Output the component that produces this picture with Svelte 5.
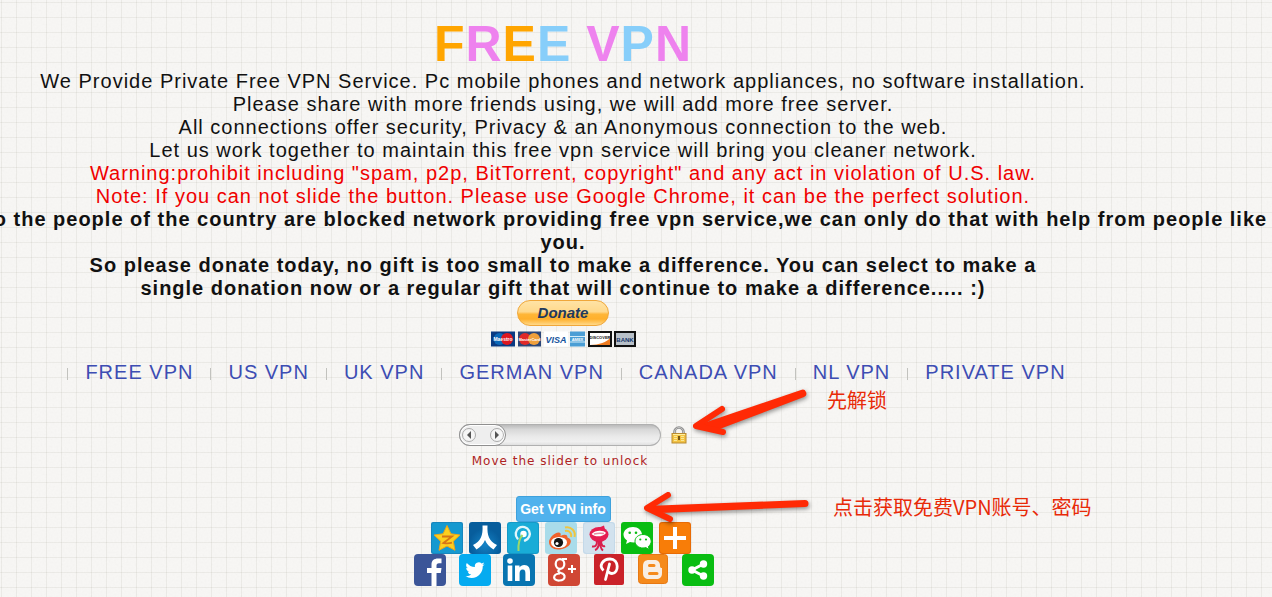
<script>
  const title = [
    ['F', 'orange'], ['R', 'violet'], ['E', 'orange'], ['E', 'sky'],
    [' ', 'sky'], ['V', 'violet'], ['P', 'sky'], ['N', 'violet']
  ];
  const servers = ['FREE VPN', 'US VPN', 'UK VPN', 'GERMAN VPN', 'CANADA VPN', 'NL VPN', 'PRIVATE VPN'];
  let unlock = $state(0);
</script>

<main>
  <h1>{#each title as [letter, tone]}<span class={tone}>{letter}</span>{/each}</h1>

  <div class="intro">
    <p>We Provide Private Free VPN Service. Pc mobile phones and network appliances, no software installation.</p>
    <p>Please share with more friends using, we will add more free server.</p>
    <p>All connections offer security, Privacy &amp; an Anonymous connection to the web.</p>
    <p>Let us work together to maintain this free vpn service will bring you cleaner network.</p>
    <p class="warn">Warning:prohibit including "spam, p2p, BitTorrent, copyright" and any act in violation of U.S. law.</p>
    <p class="warn">Note: If you can not slide the button. Please use Google Chrome, it can be the perfect solution.</p>
    <p class="strong wide">To the people of the country are blocked network providing free vpn service,we can only do that with help from people like</p>
    <p class="strong">you.</p>
    <p class="strong">So please donate today, no gift is too small to make a difference. You can select to make a</p>
    <p class="strong">single donation now or a regular gift that will continue to make a difference..... :)</p>
  </div>

  <form class="donate" onsubmit={(e) => e.preventDefault()}>
    <button class="pill">Donate</button>
    <svg class="cards" viewBox="0 0 145 16" width="145" height="16" aria-hidden="true">
      <rect width="24" height="15" y=".5" fill="#0a3a82" />
      <circle cx="8.500" cy="8" r="6" fill="#0b68b8" /><circle cx="16" cy="8" r="6" fill="#dc1720" />
      <text x="12" y="10" class="brand" fill="#fff">Maestro</text>
      <rect x="27" width="23" height="15" y=".5" fill="#2b4678" />
      <circle cx="34" cy="8" r="6" fill="#e02828" /><circle cx="43" cy="8" r="6" fill="#f0a03c" />
      <text x="38.500" y="10" class="brand small" fill="#fff">MasterCard</text>
      <rect x="53" width="24" height="15" y=".5" fill="#fff" />
      <text x="65" y="12" class="visa" fill="#17549c">VISA</text>
      <rect x="79" width="15" height="15" y=".5" fill="#4b9ed5" />
      <path d="M79 5.500h15M79 11h15" stroke="#d3ecf8" stroke-width="1" />
      <text x="86.500" y="10" class="brand small" fill="#fff">AMEX</text>
      <rect x="98" y="1" width="22" height="14" fill="#fff" stroke="#111" stroke-width="2" />
      <path d="M99 14C108 14 116 11 119 7v7z" fill="#ef7b20" />
      <text x="109" y="8" class="brand small" fill="#111">DISCOVER</text>
      <rect x="124" y="1" width="20" height="14" fill="#b8c0c8" stroke="#111" stroke-width="2" />
      <text x="134" y="10.500" class="bank" fill="#16366a">BANK</text>
    </svg>
  </form>

  <nav>
    <ul>
      {#each servers as server}
        <li><a href="#vpn">{server}</a></li>
      {/each}
    </ul>
  </nav>

  <section class="lock">
    <div class="lock-row">
      <input id="unlock" type="range" min="0" max="100" bind:value={unlock} />
      <svg viewBox="0 0 16 18" width="16" height="18" aria-hidden="true">
        <path d="M3.500 9V6a4.500 4.500 0 0 1 9 0v3" fill="none" stroke="#8d8d8d" stroke-width="2.600" />
        <path d="M3.500 9V6a4.500 4.500 0 0 1 9 0v3" fill="none" stroke="#c4c4c4" stroke-width="1" />
        <rect x="1" y="7.500" width="14" height="9.500" fill="#f3c343" stroke="#b98b32" />
        <path d="M2 8.500h12" stroke="#fff0a0" />
        <path d="M3 10.500h3m4 0h3m-10 2h3m4 0h3m-10 2h3m4 0h3" stroke="#fae898" />
        <path d="M8 10v4" stroke="#765611" stroke-width="2" />
      </svg>
    </div>
    <label for="unlock">Move the slider to unlock</label>
  </section>

  <button class="info">Get VPN info</button>

  <div class="share first">
    <a href="#qzone" aria-label="QZone"><svg viewBox="0 0 32 32">
      <rect width="32" height="32" rx="2" fill="#1786bd" /><rect x="1" y="1" width="30" height="30" rx="2" fill="#1599d0" />
      <path d="M16 3.500l3.900 8.300 9 1.200-6.600 6.300 1.700 9-8-4.300-8 4.300 1.700-9L3.100 13l9-1.200z" fill="#fdcf1f" stroke="#f0a516" />
      <path d="M11 14.500h10l-8.500 6.500c3.500.500 6 .400 8.500-.300" fill="none" stroke="#d77516" stroke-width="1.800" />
    </svg></a>
    <a href="#renren" aria-label="Renren"><svg viewBox="0 0 32 32">
      <defs><radialGradient id="renren" cy=".7"><stop stop-color="#1483c6" /><stop offset="1" stop-color="#075d9c" /></radialGradient></defs>
      <rect width="32" height="32" rx="3" fill="url(#renren)" />
      <path d="M13.500 3.500h5c-.500 10 1.500 15.500 9.500 19.500l-3.500 4.500c-4-2.500-7-5.500-8.500-9.500-1.500 4-4.500 7-8.500 9.500L4 23c8-4 10-9.500 9.500-19.500z" fill="#fff" />
    </svg></a>
    <a href="#tweibo" aria-label="Tencent Weibo"><svg viewBox="0 0 32 32">
      <rect width="32" height="32" rx="3" fill="#159ac7" /><rect x="1" y="1" width="30" height="30" rx="3" fill="#19acd7" />
      <path d="M10.500 16.500a7 7 0 1 1 7.500 2" fill="none" stroke="#e2f6fb" stroke-width="2.400" stroke-linecap="round" />
      <circle cx="16.500" cy="12" r="3.200" fill="#fff" />
      <path d="M15.500 13c-3.500 4-4.500 9-4 16" fill="none" stroke="#9ed969" stroke-width="2" />
    </svg></a>
    <a href="#weibo" aria-label="Sina Weibo"><svg viewBox="0 0 32 32">
      <rect width="32" height="32" rx="3" fill="#a9dcea" />
      <path d="M4 20c0-4 6-10 10-9.500 2 .300 2 2 1.500 3.500 3-1.500 7-2 7 1.500 3 1 4 3 3 5.500-1.500 4-7 6.500-12.500 6.500C8 27.500 4 24.500 4 20z" fill="#f0622c" />
      <ellipse cx="14" cy="20.500" rx="8" ry="5.500" fill="#fff" />
      <circle cx="13.500" cy="20.500" r="4.600" fill="#151515" /><circle cx="12" cy="21.500" r="1.600" fill="#fff" />
      <path d="M20 9c4-1 7 2 6 6M20 5.500c6-1.500 11 3.500 9.500 9.500" fill="none" stroke="#efc540" stroke-width="2" />
    </svg></a>
    <a href="#sohu" aria-label="Sohu"><svg viewBox="0 0 32 32">
      <rect width="32" height="32" rx="3" fill="#c4d9e9" /><rect x="1" y="1" width="30" height="30" rx="3" fill="#d2e2ee" />
      <ellipse cx="16" cy="12.500" rx="9.500" ry="7.500" fill="#e51d51" /><path d="M15 6l6-2.500 1 4z" fill="#e51d51" />
      <path d="M8.500 12c3-4 12-4.500 14.500-1-3 4-11 4.500-14.500 1z" fill="#fff" /><path d="M11 12c4-1 7-1 10-.500" stroke="#e88ca2" stroke-width="1.500" />
      <path d="M14 19c0 5-2 6-5 5.500M16 19c0 5-1 8-4 9M17 19c0 5 1 8 3 9.500M18 19c0 4 2 6 4 5" fill="none" stroke="#d91f4d" stroke-width="2" />
    </svg></a>
    <a href="#wechat" aria-label="WeChat"><svg viewBox="0 0 32 32">
      <rect width="32" height="32" rx="3" fill="#09bd12" />
      <path d="M12 5C6.500 5 2.500 8.500 2.500 12.500c0 2.500 1.500 4.500 3.500 6L5 22l4-2c1 .300 2 .400 3.500.400C18 20.400 21 17 21 12.700 21 8.500 17 5 12 5z" fill="#fff" />
      <path d="M22 12.500c-4.500 0-8 3-8 6.700s3.500 6.800 8 6.800c1 0 2-.200 2.800-.400l3.400 2-.800-3.100c1.700-1.300 2.800-3.100 2.800-5.200 0-3.800-3.700-6.800-8.200-6.800z" fill="#fff" stroke="#09bd12" />
      <g fill="#09bd12"><circle cx="8.700" cy="10.700" r="1.300" /><circle cx="15" cy="10.700" r="1.300" /><circle cx="19.300" cy="17.500" r="1.100" /><circle cx="25" cy="17.500" r="1.100" /></g>
    </svg></a>
    <a href="#more" aria-label="More"><svg viewBox="0 0 32 32">
      <rect width="32" height="32" rx="3" fill="#e86b05" /><rect x="1" y="1" width="30" height="30" rx="3" fill="#f87d08" />
      <path d="M16 5v22M5 16h22" stroke="#fff" stroke-width="4" />
    </svg></a>
  </div>

  <div class="share second">
    <a href="#facebook" aria-label="Facebook"><svg viewBox="0 0 32 32">
      <rect width="32" height="32" rx="4" fill="#3b5598" />
      <path d="M17.500 32V19h-4.500v-5h4.500v-3.500C17.500 6.500 20 4.500 24 4.500h3.500v4.700H25c-2 0-2.500 1-2.500 2.300V14h5l-.700 5h-4.300v13z" fill="#fff" />
    </svg></a>
    <a href="#twitter" aria-label="Twitter"><svg viewBox="0 0 32 32">
      <rect width="32" height="32" rx="4" fill="#05abf0" />
      <path transform="translate(6.500 6.500) scale(.8)" d="M23.950 4.570a10 10 0 0 1-2.820.77 4.960 4.960 0 0 0 2.160-2.720c-.950.550-2 .950-3.130 1.180a4.920 4.920 0 0 0-8.380 4.480C7.690 8.100 4.070 6.130 1.640 3.160a4.920 4.920 0 0 0 1.520 6.570 4.900 4.900 0 0 1-2.230-.61v.060a4.920 4.920 0 0 0 3.950 4.830 5 5 0 0 1-2.210.080 4.940 4.940 0 0 0 4.600 3.420A9.870 9.870 0 0 1 0 19.540a14 14 0 0 0 7.550 2.210c9.050 0 14-7.500 14-13.980 0-.210 0-.420-.010-.630a9.940 9.940 0 0 0 2.410-2.570z" fill="#fff" />
    </svg></a>
    <a href="#linkedin" aria-label="LinkedIn"><svg viewBox="0 0 32 32">
      <rect width="32" height="32" rx="4" fill="#0875b1" />
      <circle cx="7" cy="7" r="2.800" fill="#fff" />
      <path d="M4.700 11.500h4.600V27H4.700zM12 11.500h4.500v2c1-1.500 2.500-2.400 4.700-2.400 4.500 0 5.800 3 5.800 7V27h-4.600v-7.500c0-2-.300-4-2.700-4s-3.100 1.800-3.100 3.900V27H12z" fill="#fff" />
    </svg></a>
    <a href="#google" aria-label="Google Plus"><svg viewBox="0 0 32 32">
      <rect width="32" height="32" rx="4" fill="#d04734" />
      <ellipse cx="12" cy="10" rx="4.300" ry="4.800" fill="none" stroke="#fff" stroke-width="2.200" />
      <path d="M14 5h5M12 15c-3 2-2 3 1 4 5 1.500 5 7-1.500 7.500C4.500 27 4 20 12 19.500" fill="none" stroke="#fff" stroke-width="2.200" />
      <path d="M24 11v8M20 15h8" stroke="#fff" stroke-width="2" />
    </svg></a>
    <a href="#pinterest" aria-label="Pinterest"><svg viewBox="0 0 32 32">
      <rect x="1" width="30" height="31" rx="2" fill="#ca2229" />
      <path d="M10.500 16.500c-5-4.500-1-11.500 6.500-11.500 9.500 0 9 14.500 2 14.500-2 0-3-1-3.500-2" fill="none" stroke="#fff" stroke-width="2.800" />
      <path d="M16.500 10L12.500 25.500" stroke="#fff" stroke-width="2.800" stroke-linecap="round" />
    </svg></a>
    <a href="#blogger" aria-label="Blogger"><svg viewBox="0 0 32 32">
      <rect x="1.500" y=".5" width="29" height="29" rx="3" fill="#f58a1c" stroke="#e77812" />
      <path d="M12 6h5c4 0 6 2 6 5.500 0 2 .500 2.500 2 2.500v5c0 4-2 6-6 6h-7c-4 0-6-2-6-6v-7c0-4 2-6 6-6z" fill="#f8eee4" />
      <path d="M12.500 11.500H17M12.500 19.500H20" stroke="#f58a1c" stroke-width="3" stroke-linecap="round" />
    </svg></a>
    <a href="#share" aria-label="Share"><svg viewBox="0 0 32 32">
      <rect width="32" height="32" rx="4" fill="#09bd12" />
      <path d="M21.500 10L10 16l11.500 6" fill="none" stroke="#fff" stroke-width="3" />
      <g fill="#fff"><circle cx="21.500" cy="10" r="3.700" /><circle cx="10" cy="16" r="3.700" /><circle cx="21.500" cy="22" r="3.700" /></g>
    </svg></a>
  </div>

  <svg class="arrow unlock-arrow" viewBox="0 0 120 60" aria-hidden="true">
    <path d="M5 45L111 9a3.500 3.500 0 0 1 3 7L27 49z" />
    <path d="M32 28L6 45l27 6" class="head" />
  </svg>
  <p class="note unlock-note">先解锁</p>

  <svg class="arrow info-arrow" viewBox="0 0 172 40" aria-hidden="true">
    <path d="M4 17L163 11a3.500 3.500 0 0 1 0 7L17 24z" />
    <path d="M26 6L5 19l23 11" class="head" />
  </svg>
  <p class="note info-note">点击获取免费VPN账号、密码</p>
</main>

<style>
  :global(body) {
    margin: 0;
    overflow-x: hidden;
    background-color: #f8f7f5;
    background-image:
      linear-gradient(90deg, rgba(90, 90, 70, 0.08) 1px, transparent 1px),
      linear-gradient(rgba(90, 90, 70, 0.08) 1px, transparent 1px),
      url("data:image/svg+xml,%3Csvg xmlns='http://www.w3.org/2000/svg' width='150' height='150'%3E%3Cfilter id='n'%3E%3CfeTurbulence type='fractalNoise' baseFrequency='.5' numOctaves='2' stitchTiles='stitch'/%3E%3CfeColorMatrix type='saturate' values='0'/%3E%3C/filter%3E%3Crect width='150' height='150' filter='url(%23n)' opacity='.05'/%3E%3C/svg%3E");
    background-size: 15px 15px, 15px 15px, 150px 150px;
    background-position: 1px 2px;
  }
  main {
    position: relative;
    display: flex;
    flex-direction: column;
    align-items: center;
    padding: 18px 146px 11px 0;
    overflow: hidden;
    font-family: "Liberation Sans", Arial, sans-serif;
    color: #111;
  }
  h1, p, ul { margin: 0; padding: 0; }
  h1 {
    font-size: 50px;
    line-height: 52px;
    letter-spacing: 1px;
    white-space: pre;
  }
  .orange { color: #ffa500; }
  .violet { color: #ee82ee; }
  .sky { color: #87cefa; }
  .intro {
    align-self: stretch;
    font-size: 20px;
    line-height: 23px;
    letter-spacing: 1px;
    text-align: center;
    white-space: nowrap;
  }
  .warn { color: #f00000; }
  .strong { font-weight: bold; }
  .wide { margin-left: -18px; text-align: left; }
  .donate {
    display: flex;
    flex-direction: column;
    align-items: center;
    gap: 5px;
  }
  button { font-family: inherit; padding: 0; }
  .pill {
    width: 92px;
    height: 26px;
    padding-bottom: 2px;
    border: 1px solid #f0a73a;
    border-radius: 13px;
    background: linear-gradient(#ffe3a5, #ffd98c 45%, #ffb637 55%, #ffb02c 75%, #ffd98a);
    color: #213a5e;
    font-size: 15px;
    font-weight: bold;
    font-style: italic;
  }
  .cards { display: block; }
  .brand { font: bold 5px "Liberation Sans", sans-serif; text-anchor: middle; }
  .small { font-size: 4px; }
  .visa { font: italic bold 9px "Liberation Sans", sans-serif; text-anchor: middle; }
  .bank { font: bold 6px "Liberation Sans", sans-serif; text-anchor: middle; }
  nav { margin-top: 13px; padding-left: 24px; }
  ul { display: flex; list-style: none; }
  li {
    display: flex;
    align-items: center;
    font-size: 20px;
    line-height: 24px;
    letter-spacing: 1px;
    white-space: nowrap;
  }
  li::before { content: ""; width: 1px; height: 12px; margin-top: 4px; background: #c2c2be; }
  li a { padding: 0 17px; color: #3d4db3; text-decoration: none; }
  .lock {
    display: flex;
    flex-direction: column;
    align-items: center;
    gap: 6px;
    margin-top: 40px;
  }
  .lock-row { display: flex; gap: 10px; padding-left: 20px; }
  input {
    appearance: none;
    box-sizing: border-box;
    width: 202px;
    height: 22px;
    margin: 0;
    border-radius: 11px;
    background: linear-gradient(#b4b4b4, #d8d8d8 25%, #e9e9e9 55%, #f0f0f0 80%, #dcdcdc);
    box-shadow: inset 0 0 0 1px #b0b0b0;
  }
  input::-webkit-slider-thumb {
    appearance: none;
    box-sizing: border-box;
    width: 47px;
    height: 22px;
    border: 1px solid #8f8f8f;
    border-radius: 11px;
    background: #eee url("data:image/svg+xml,%3Csvg xmlns='http://www.w3.org/2000/svg' width='45' height='20'%3E%3Cg fill='%23f6f6f6' stroke='%23aaa'%3E%3Ccircle cx='9' cy='10' r='6.500'/%3E%3Ccircle cx='37' cy='10' r='6.500'/%3E%3C/g%3E%3Cpath d='M11 6v8l-4-4zM35 6v8l4-4z' fill='%23555'/%3E%3C/svg%3E") center no-repeat;
    box-shadow: inset 0 0 0 1px #fff;
  }
  .lock-row svg { margin-top: 2px; }
  label {
    padding-right: 6px;
    color: #ae2323;
    font: 12px/18px "DejaVu Sans", Verdana, sans-serif;
    letter-spacing: 1px;
  }
  .info {
    width: 95px;
    height: 26px;
    margin-top: 26px;
    border: 1px solid #3ea1dc;
    border-radius: 3px;
    background: #50b2ed;
    color: #fff;
    font-size: 14px;
    font-weight: bold;
    white-space: nowrap;
  }
  .share { display: flex; }
  .share a, .share svg { display: block; width: 32px; height: 32px; }
  .first { gap: 6px; padding-right: 4px; }
  .second { width: 300px; justify-content: space-between; padding-left: 2px; }
  .arrow {
    position: absolute;
    fill: #ff2a05;
    filter: drop-shadow(1px 2px 2px rgba(0, 0, 0, 0.4));
  }
  .head {
    fill: none;
    stroke: #ff2a05;
    stroke-width: 6px;
    stroke-linecap: round;
    stroke-linejoin: round;
  }
  .unlock-arrow { left: 690px; top: 381px; width: 120px; height: 60px; }
  .info-arrow { left: 642px; top: 489px; width: 172px; height: 40px; }
  .note {
    position: absolute;
    color: #e82a08;
    font: 20px/28px "Noto Sans CJK SC", sans-serif;
    white-space: nowrap;
  }
  .unlock-note { left: 827px; top: 386px; }
  .info-note { left: 833px; top: 493px; }
</style>
